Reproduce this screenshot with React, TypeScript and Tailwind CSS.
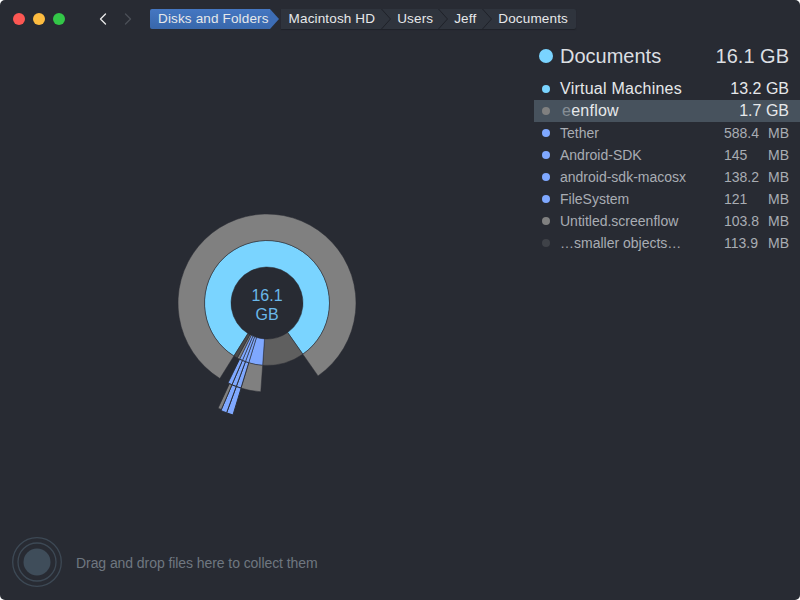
import { ChevronLeft, ChevronRight } from 'lucide-react';

const CX = 120;
const CY = 120;

const polar = (r: number, deg: number) => {
  const a = ((deg - 90) * Math.PI) / 180;
  return `${(CX + r * Math.cos(a)).toFixed(2)} ${(CY + r * Math.sin(a)).toFixed(2)}`;
};

const arc = (r0: number, r1: number, from: number, to: number) => {
  const large = to - from > 180 ? 1 : 0;
  return `M${polar(r1, from)}A${r1} ${r1} 0 ${large} 1 ${polar(r1, to)}L${polar(r0, to)}A${r0} ${r0} 0 ${large} 0 ${polar(r0, from)}Z`;
};

const segments = [
  // 1er anneau
  { r0: 36, r1: 62.5, from: 212, to: 505, fill: '#7ad4ff', sw: 0.5 },
  { r0: 36, r1: 62.5, from: 145, to: 184, fill: '#5f5f5f', sw: 0.5 },
  { r0: 36, r1: 62.5, from: 184, to: 197, fill: '#7fa8ff', sw: 0.5 },
  { r0: 36, r1: 62.5, from: 197, to: 200.2, fill: '#7fa8ff', sw: 0.6 },
  { r0: 36, r1: 62.5, from: 200.2, to: 203.2, fill: '#7fa8ff', sw: 0.6 },
  { r0: 36, r1: 62.5, from: 203.2, to: 206, fill: '#7fa8ff', sw: 0.6 },
  { r0: 36, r1: 62.5, from: 206, to: 208.4, fill: '#808080', sw: 0.5 },
  { r0: 36, r1: 62.5, from: 208.4, to: 212, fill: '#4a4a4a', sw: 0.5 },
  // 2e anneau
  { r0: 62.5, r1: 89, from: 212, to: 505, fill: '#808080', sw: 0.5 },
  { r0: 62.5, r1: 89, from: 184, to: 197, fill: '#808080', sw: 0.5 },
  { r0: 62.5, r1: 89, from: 197, to: 200.2, fill: '#7fa8ff', sw: 0.9 },
  { r0: 62.5, r1: 89, from: 200.2, to: 203.2, fill: '#7fa8ff', sw: 0.9 },
  { r0: 62.5, r1: 89, from: 203.2, to: 206, fill: '#7fa8ff', sw: 0.9 },
  // 3e anneau
  { r0: 89, r1: 117, from: 196.9, to: 200.2, fill: '#7fa8ff', sw: 1 },
  { r0: 89, r1: 117, from: 200.2, to: 203.2, fill: '#7fa8ff', sw: 1 },
  { r0: 89, r1: 116, from: 203.2, to: 205, fill: '#808080', sw: 0.8 },
];

const crumbs = [
  { label: 'Macintosh HD', cls: 'pl-[8px] pr-[6px]' },
  { label: 'Users', cls: 'pl-[5px] pr-[5px]' },
  { label: 'Jeff', cls: 'pl-[5px] pr-[6px]' },
  { label: 'Documents', cls: 'pl-[5px] pr-[8px]' },
];

const rows = [
  { name: 'Tether', size: '588.4', dot: 'bg-[#7fa8ff]' },
  { name: 'Android-SDK', size: '145', dot: 'bg-[#7fa8ff]' },
  { name: 'android-sdk-macosx', size: '138.2', dot: 'bg-[#7fa8ff]' },
  { name: 'FileSystem', size: '121', dot: 'bg-[#7fa8ff]' },
  { name: 'Untitled.screenflow', size: '103.8', dot: 'bg-[#808080]' },
  { name: '…smaller objects…', size: '113.9', dot: 'bg-[#3f4248]' },
];

function CrumbArrow({ active = false }: { active?: boolean }) {
  return (
    <svg width="11" height="20" viewBox="0 0 11 20" className="shrink-0">
      <path d="M0 0L9 10L0 20Z" fill={active ? '#3d6db5' : '#2f343d'} />
      {!active && <path d="M0.5 0L9.5 10L0.5 20" fill="none" stroke="#1f2228" strokeWidth="1" />}
    </svg>
  );
}

export default function App() {
  return (
    <div className="w-[800px] h-[600px] bg-white overflow-hidden" style={{ fontFamily: '"Liberation Sans", Arial, sans-serif' }}>
      <div className="w-full h-full bg-[#282b33] rounded-[5px] flex flex-col">
        {/* Barre du haut */}
        <div className="h-[38px] shrink-0 flex items-center pl-[13px]">
          <div className="flex gap-2">
            <span className="w-3 h-3 rounded-full bg-[#fc5753]" />
            <span className="w-3 h-3 rounded-full bg-[#fdbc40]" />
            <span className="w-3 h-3 rounded-full bg-[#33c748]" />
          </div>
          <div className="flex items-center gap-[5px] ml-[28px]">
            <ChevronLeft size={20} strokeWidth={1.6} className="text-[#e8e8e8]" />
            <ChevronRight size={20} strokeWidth={1.6} className="text-[#4b4f57]" />
          </div>
          <div className="flex items-center h-5 ml-[12px] text-[13.5px] tracking-[0.15px] text-[#e6e8ea]">
            <div className="h-5 flex items-center pl-2 pr-[1px] rounded-l-[2px] bg-gradient-to-b from-[#4577c2] to-[#3867ab]">Disks and Folders</div>
            <CrumbArrow active />
            <div className="flex items-center bg-[#2f343d] h-5 rounded-r-[2px] shadow-[0_1px_1px_#1f2228]">
              {crumbs.map((c, i) => (
                <div key={c.label} className="flex items-center h-5">
                  <span className={c.cls}>{c.label}</span>
                  {i < crumbs.length - 1 && <CrumbArrow />}
                </div>
              ))}
            </div>
          </div>
        </div>

        {/* Zone principale */}
        <div className="flex-1 flex min-h-0">
          <div className="flex-1 flex justify-center pt-[145px]">
            <svg width="240" height="240" viewBox="0 0 240 240">
              {segments.map((s, i) => (
                <path key={i} d={arc(s.r0, s.r1, s.from, s.to)} fill={s.fill} stroke="#282b33" strokeWidth={s.sw} />
              ))}
              <text x={CX} y={CY - 2} textAnchor="middle" fontSize="16" fill="#6ab8ea">16.1</text>
              <text x={CX} y={CY + 17} textAnchor="middle" fontSize="16" fill="#6ab8ea">GB</text>
            </svg>
          </div>

          <div className="w-[266px] shrink-0 pt-[7px]">
            <div className="flex items-center h-[22px] pl-[5px] pr-[11px] text-[20px] text-[#dcdfe2]">
              <span className="w-[14px] h-[14px] rounded-full bg-[#7ad4ff]" />
              <span className="ml-[7px] flex-1">Documents</span>
              <span>16.1 GB</span>
            </div>
            <div className="flex items-center h-[22px] mt-[11px] pl-[8px] pr-[11px] text-[16px] text-[#e6e8ea]">
              <span className="w-2 h-2 rounded-full bg-[#7ad4ff]" />
              <span className="ml-[10px] flex-1 tracking-[0.25px]">Virtual Machines</span>
              <span>13.2 GB</span>
            </div>
            <div className="flex items-center h-[22px] pl-[8px] pr-[11px] text-[16px] text-[#e6e8ea] bg-[#47525d]">
              <span className="w-2 h-2 rounded-full bg-[#808080]" />
              <span className="ml-[12px] flex-1 tracking-[0.25px]"><span className="opacity-40">e</span>enflow</span>
              <span>1.7 GB</span>
            </div>
            {rows.map(r => (
              <div key={r.name} className="flex items-center h-[22px] pl-[8px] pr-[11px] text-[14px] text-[#a9adb3]">
                <span className={`w-2 h-2 rounded-full ${r.dot}`} />
                <span className="ml-[10px] flex-1">{r.name}</span>
                <span className="w-[46px]">{r.size}</span>
                <span className="w-[19px] whitespace-nowrap flex justify-end">MB</span>
              </div>
            ))}
          </div>
        </div>

        {/* Zone de dépôt */}
        <div className="h-[76px] shrink-0 flex items-center pl-3">
          <svg width="50" height="50" viewBox="0 0 50 50">
            <circle cx="25" cy="25" r="24.3" fill="none" stroke="#3d4955" strokeWidth="1.3" />
            <circle cx="25" cy="25" r="19" fill="none" stroke="#3d4955" strokeWidth="1.3" />
            <circle cx="25" cy="25" r="13.5" fill="#3f4d5a" />
          </svg>
          <span className="ml-[14px] pt-[2px] text-[14px] tracking-[-0.07px] text-[#6f7780]">Drag and drop files here to collect them</span>
        </div>
      </div>
    </div>
  );
}
